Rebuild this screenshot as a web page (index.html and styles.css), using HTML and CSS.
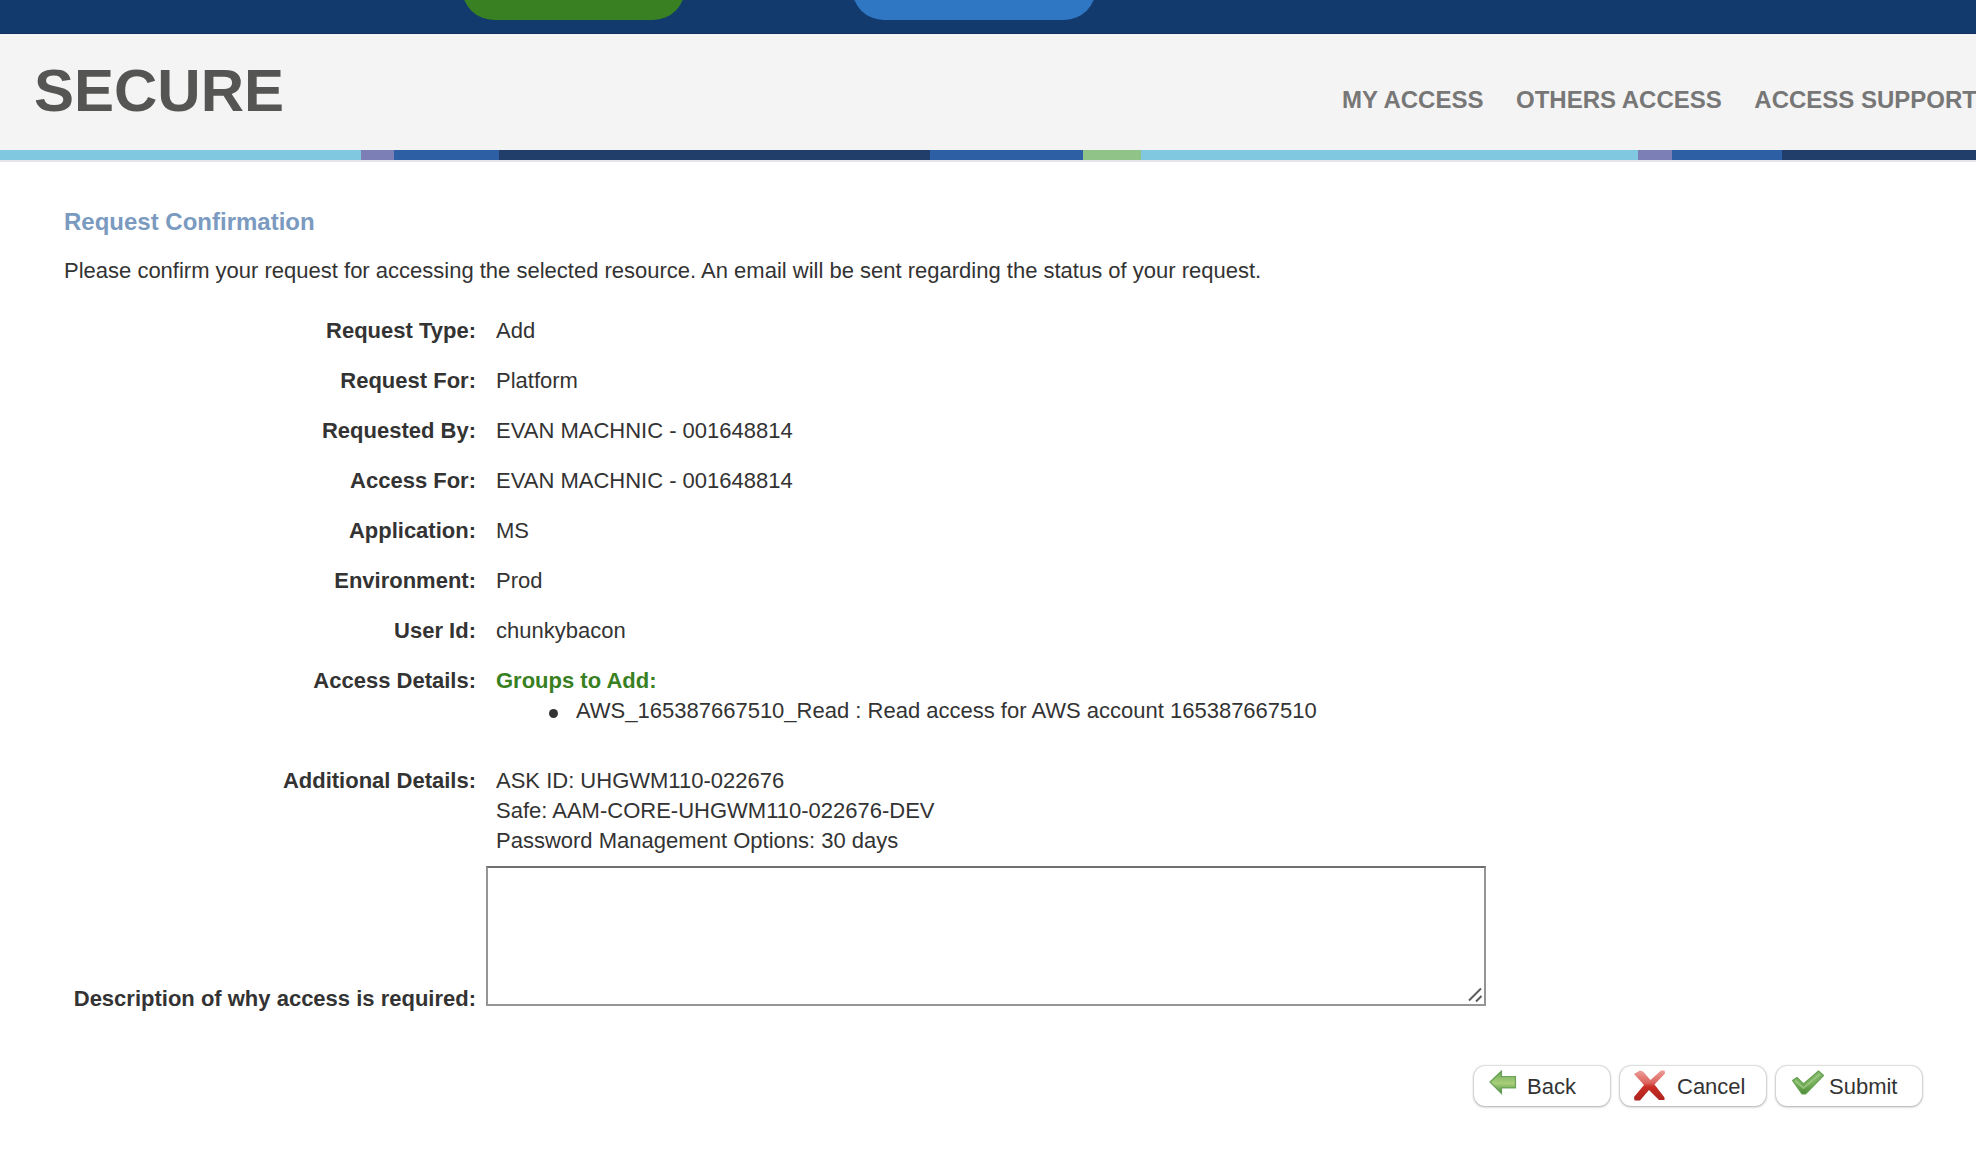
FILE: index.html
```html
<!DOCTYPE html>
<html lang="en">
<head>
<meta charset="utf-8">
<title>Secure - Request Confirmation</title>
<link rel="stylesheet" href="styles.css">
</head>
<body>
<div class="topbar"><span class="pill pill-green"></span><span class="pill pill-blue"></span></div>
<header class="header">
  <div class="logo">SECURE</div>
  <nav class="nav"><a>MY ACCESS</a><a>OTHERS ACCESS</a><a>ACCESS SUPPORT</a></nav>
</header>
<div class="stripe"></div>
<main class="content">
  <h1 class="title">Request Confirmation</h1>
  <p class="intro">Please confirm your request for accessing the selected resource. An email will be sent regarding the status of your request.</p>
  <dl class="details">
    <dt>Request Type:</dt><dd>Add</dd>
    <dt>Request For:</dt><dd>Platform</dd>
    <dt>Requested By:</dt><dd>EVAN MACHNIC - 001648814</dd>
    <dt>Access For:</dt><dd>EVAN MACHNIC - 001648814</dd>
    <dt>Application:</dt><dd>MS</dd>
    <dt>Environment:</dt><dd>Prod</dd>
    <dt>User Id:</dt><dd>chunkybacon</dd>
    <dt>Access Details:</dt>
    <dd><strong class="groups">Groups to Add:</strong>
      <ul class="group-list"><li>AWS_165387667510_Read : Read access for AWS account 165387667510</li></ul></dd>
    <dt>Additional Details:</dt>
    <dd>ASK ID: UHGWM110-022676<br>Safe: AAM-CORE-UHGWM110-022676-DEV<br>Password Management Options: 30 days</dd>
  </dl>
  <div class="reason">
    <label class="reason-label" for="reason">Description of why access is required:</label>
    <div class="reason-box">
      <textarea id="reason" class="reason-input"></textarea>
      <svg class="grip" width="16" height="16" viewBox="0 0 16 16"><path d="M2 13.500 14 1.500M9 14.500 14.500 9" fill="none" stroke="#5c5c5c" stroke-width="2"/></svg>
    </div>
  </div>
  <div class="actions">
    <button class="btn btn-back">
      <svg width="28" height="25" viewBox="0 0 28 25"><defs><linearGradient id="g1" x1="0" y1="0" x2="0" y2="1"><stop offset="0" stop-color="#6da856"/><stop offset=".55" stop-color="#a9cf79"/><stop offset="1" stop-color="#4d913f"/></linearGradient></defs><path d="M1 12 12.500 1V6.500H26.500V18H12.500V23.500Z" fill="url(#g1)" stroke="#519345" stroke-opacity=".8" stroke-width="1.200"/></svg>
      <span>Back</span>
    </button>
    <button class="btn btn-cancel">
      <svg width="34" height="31" viewBox="0 0 34 31"><defs><linearGradient id="g2" x1="0" y1="0" x2="0" y2="1"><stop offset="0" stop-color="#ee9c98"/><stop offset=".4" stop-color="#dc6660"/><stop offset=".55" stop-color="#c92c25"/><stop offset="1" stop-color="#ad2420"/></linearGradient></defs><path d="M1 4 7 .5 10 1.500 17.500 10 28 .5H31.500L32 3.500 21.500 14.500 31.500 27.500V30H26L16 20 7 30.500H1.500L1 27 11 15Z" fill="url(#g2)"/></svg>
      <span>Cancel</span>
    </button>
    <button class="btn btn-submit">
      <svg width="34" height="25" viewBox="0 0 34 25"><defs><linearGradient id="g3" x1="0" y1="0" x2="0" y2="1"><stop offset="0" stop-color="#84b96a"/><stop offset=".55" stop-color="#78b15c"/><stop offset="1" stop-color="#4b8b37"/></linearGradient></defs><path d="M1.500 10.500 6 7.500 12.500 14 27.500 1 32.500 5.500 14.500 24H11Z" fill="url(#g3)" stroke="#67a253" stroke-width="1.200" stroke-linejoin="round"/><path d="M4 10.500 12.500 18 29 4" fill="none" stroke="#a5ce8a" stroke-opacity=".7" stroke-width="1.800"/></svg>
      <span>Submit</span>
    </button>
  </div>
</main>
</body>
</html>
```
FILE: styles.css
```css
* { box-sizing: border-box; }
body {
  margin: 0;
  height: 1156px;
  overflow: hidden;
  background: #fff;
  color: #333;
  font: 22px/30px "Liberation Sans", Arial, sans-serif;
}
.topbar {
  display: flex;
  align-items: flex-end;
  gap: 167px;
  height: 34px;
  padding: 0 0 13px 462px;
  overflow: hidden;
  background: #123a6d;
  border-bottom: 1px solid #142f68;
}
.pill { height: 64px; border-radius: 32px; }
.pill-green { width: 223px; background: #388022; }
.pill-blue { width: 244px; background: #2f77c3; }
.header {
  display: flex;
  justify-content: space-between;
  height: 116px;
  padding-left: 34px;
  background: #f4f4f4;
}
.logo { padding-top: 22px; font-size: 60px; line-height: 70px; font-weight: bold; color: #555553; }
.nav {
  display: flex;
  gap: 32.5px;
  padding-top: 51px;
  margin-right: -1px;
  font-size: 24px;
  font-weight: bold;
  color: #777;
  white-space: nowrap;
}
.stripe {
  height: 12px;
  border-bottom: 2px solid #e6e6ea;
  background: linear-gradient(90deg,
    #80c8e0 361px, #7c7fb5 361px 394px, #2d5fa4 394px 499px,
    #213e6b 499px 930px, #2d5fa4 930px 1083px, #90c387 1083px 1141px,
    #80c8e0 1141px 1638px, #7c7fb5 1638px 1672px, #2d5fa4 1672px 1782px, #213e6b 1782px);
}
.content { padding: 45px 54px 0 64px; }
.title { margin: 0; font-size: 24px; line-height: 30px; color: #7a9abf; }
.intro { margin: 19px 0 0; }
.details {
  display: grid;
  grid-template-columns: 412px 1fr;
  gap: 20px;
  margin: 30px 0 0;
}
.details dt { font-weight: bold; text-align: right; white-space: nowrap; }
.details dd { margin: 0; }
.groups { color: #388022; }
.group-list { margin: 0 0 20px; padding: 0; list-style: none; }
.group-list li { display: flex; align-items: center; gap: 18px; padding-left: 53px; }
.group-list li::before { content: ""; width: 9px; height: 9px; margin-top: 5px; border-radius: 50%; background: #333; }
.reason { display: flex; align-items: flex-end; gap: 10px; margin-top: 10px; }
.reason-label { width: 412px; font-weight: bold; text-align: right; white-space: nowrap; margin-bottom: -8px; }
.reason-box { position: relative; width: 1000px; height: 140px; }
.reason-input {
  display: block;
  width: 100%;
  height: 100%;
  border: 2px solid #959595;
  border-top-color: #6f6f6f;
  resize: none;
}
.grip { position: absolute; right: 3px; bottom: 3px; }
.actions { display: flex; justify-content: flex-end; gap: 10px; margin-top: 60px; }
.btn {
  display: flex;
  align-items: flex-start;
  height: 40px;
  padding: 4px 0 0;
  border: 0;
  border-radius: 11px;
  background: #fff;
  box-shadow: 0 0 2px rgba(0, 0, 0, .35), 0 1px 3px rgba(0, 0, 0, .25);
  color: #333;
  font: 22px/30px "Liberation Sans", Arial, sans-serif;
}
.btn span { padding-top: 2px; }
.btn-back { width: 136px; padding-left: 15px; gap: 10px; }
.btn-cancel { width: 146px; padding-left: 13px; gap: 10px; }
.btn-submit { width: 146px; padding-left: 15px; gap: 4px; }
```
